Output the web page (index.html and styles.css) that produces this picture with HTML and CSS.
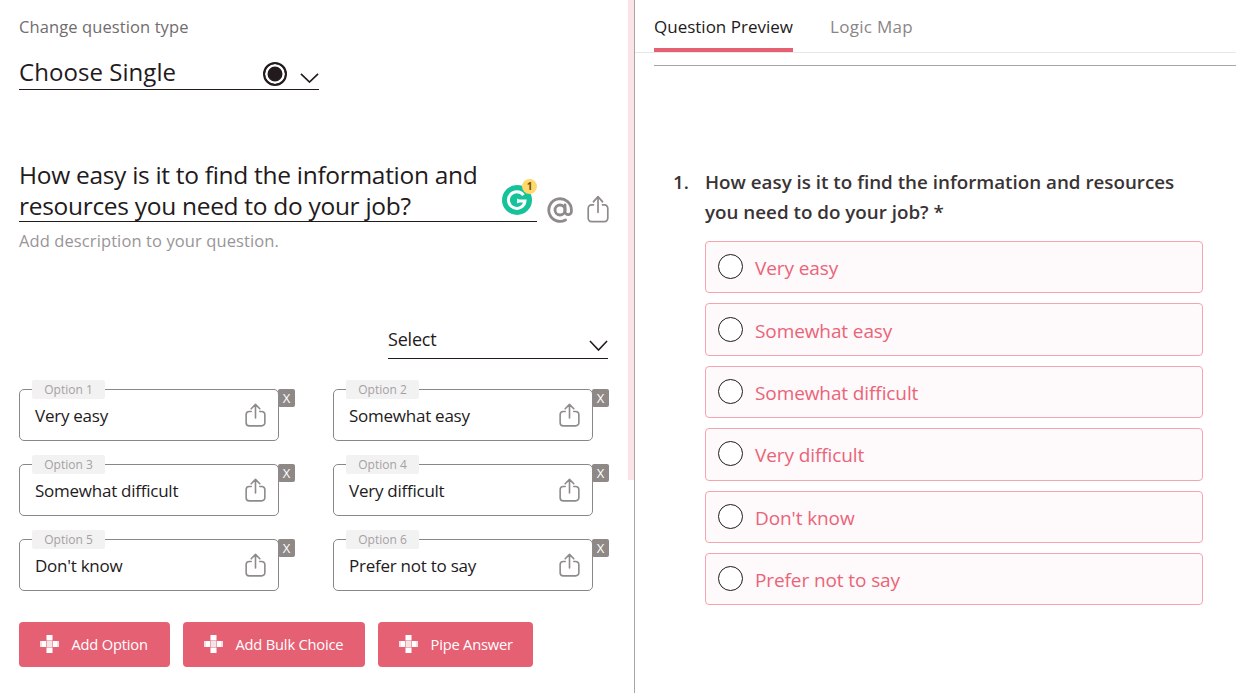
FILE: index.html
```html
<!DOCTYPE html>
<html lang="en">
<head>
<meta charset="utf-8">
<title>Question editor</title>
<link rel="stylesheet" href="styles.css">
</head>
<body>
<svg class="defs" width="0" height="0" aria-hidden="true">
  <symbol id="share" viewBox="0 0 22 25" preserveAspectRatio="none">
    <path d="M6.500 8.800H4.500a3.300 3.300 0 0 0-3.300 3.300v8.400a3.300 3.300 0 0 0 3.300 3.300h13a3.300 3.300 0 0 0 3.300-3.300v-8.400a3.300 3.300 0 0 0-3.300-3.300h-2M11 15.500V1.800M6.500 6 11 1.500 15.500 6" fill="none" stroke="currentColor" stroke-width="1.700" stroke-linecap="round" stroke-linejoin="round"/>
  </symbol>
  <symbol id="chev" viewBox="0 0 20 11" preserveAspectRatio="none">
    <path d="M1 1l9 9 9-9" fill="none" stroke="currentColor" stroke-width="1.700"/>
  </symbol>
  <symbol id="plus" viewBox="0 0 19 18">
    <path d="M6.500 0h6v5.500h-6zM6.500 12.500h6V18h-6zM0 6h6v6H0zM13 6h6v6h-6z" fill="#fff"/>
    <path d="M6.500 6h6v6h-6z" fill="#f3e4e7"/>
    <path d="M0 6h2v6H0zM17 6h2v6h-2z" fill="#f5dde1"/>
  </symbol>
</svg>
<main class="app">
  <section class="editor">
    <div class="thumb"></div>
    <div class="type-label">Change question type</div>
    <div class="type-select">
      <span class="type-name">Choose Single</span>
      <span class="radio-mark"></span>
      <svg class="type-chev"><use href="#chev"/></svg>
    </div>
    <div class="question-row">
      <div class="question-input">
        How easy is it to find the information and resources you need to do your job?
        <span class="grammarly">
          <svg viewBox="0 0 30 30" width="30" height="30"><circle cx="15" cy="15" r="15" fill="#15c39a"/><path d="M21.500 10.200A8.300 8.300 0 1 0 23 16h-7.500" fill="none" stroke="#fff" stroke-width="3"/><path d="M15 13.500l4.500 2.500-4.500 2.500z" fill="#fff"/></svg>
          <span class="g-badge">1</span>
        </span>
      </div>
      <svg class="at-icon" viewBox="0 0 26 26"><circle cx="13" cy="13" r="5" fill="none" stroke="currentColor" stroke-width="2.800"/><path d="M18 8v6.500a3.200 3.200 0 0 0 6.400 0V13A11.300 11.300 0 1 0 18.500 23" fill="none" stroke="currentColor" stroke-width="2.800" stroke-linecap="round"/></svg>
      <svg class="share-lg"><use href="#share"/></svg>
    </div>
    <div class="description">Add description to your question.</div>
    <div class="select-row">
      <div class="small-select">
        <span>Select</span>
        <svg class="small-chev"><use href="#chev"/></svg>
      </div>
    </div>
    <div class="options">
      <div class="option"><span class="option-tag">Option 1</span><span class="option-text">Very easy</span><svg class="share-md"><use href="#share"/></svg><button class="remove">X</button></div>
      <div class="option"><span class="option-tag">Option 2</span><span class="option-text">Somewhat easy</span><svg class="share-md"><use href="#share"/></svg><button class="remove">X</button></div>
      <div class="option"><span class="option-tag">Option 3</span><span class="option-text">Somewhat difficult</span><svg class="share-md"><use href="#share"/></svg><button class="remove">X</button></div>
      <div class="option"><span class="option-tag">Option 4</span><span class="option-text">Very difficult</span><svg class="share-md"><use href="#share"/></svg><button class="remove">X</button></div>
      <div class="option"><span class="option-tag">Option 5</span><span class="option-text">Don't know</span><svg class="share-md"><use href="#share"/></svg><button class="remove">X</button></div>
      <div class="option"><span class="option-tag">Option 6</span><span class="option-text">Prefer not to say</span><svg class="share-md"><use href="#share"/></svg><button class="remove">X</button></div>
    </div>
    <div class="actions">
      <button class="action"><svg class="plus"><use href="#plus"/></svg>Add Option</button>
      <button class="action"><svg class="plus"><use href="#plus"/></svg>Add Bulk Choice</button>
      <button class="action"><svg class="plus"><use href="#plus"/></svg>Pipe Answer</button>
    </div>
  </section>
  <section class="preview">
    <nav class="tabs">
      <span class="tab active">Question Preview</span>
      <span class="tab logic">Logic Map</span>
    </nav>
    <div class="rule"></div>
    <div class="q-block">
      <div class="q-title"><span class="q-num">1.</span><span class="q-text">How easy is it to find the information and resources you need to do your job? *</span></div>
      <div class="choices">
        <div class="choice"><span class="circle"></span>Very easy</div>
        <div class="choice"><span class="circle"></span>Somewhat easy</div>
        <div class="choice"><span class="circle"></span>Somewhat difficult</div>
        <div class="choice"><span class="circle"></span>Very difficult</div>
        <div class="choice"><span class="circle"></span>Don't know</div>
        <div class="choice"><span class="circle"></span>Prefer not to say</div>
      </div>
    </div>
  </section>
</main>
</body>
</html>
```

FILE: styles.css
```css
* { box-sizing: border-box; }
html, body { margin: 0; height: 100%; overflow: hidden; background: #fff; }
body { font-family: "Open Sans", "Noto Sans", sans-serif; color: #231a1c; }
.defs { position: absolute; }
.app { display: flex; width: 1236px; height: 693px; }

.editor { position: relative; width: 635px; height: 693px; padding: 16px 0 0 19px; border-right: 1px solid #a9a5a6; flex: none; }
.thumb { position: absolute; right: 0; top: 0; width: 6px; height: 480px; background: #fae4e7; }
.type-label { font-size: 16.500px; line-height: 22px; color: #716c6e; letter-spacing: .1px; }
.type-select { display: flex; align-items: flex-end; width: 300px; height: 38px; margin-top: 14px; border-bottom: 1px solid #231a1c; padding-bottom: 3px; }
.type-name { font-size: 24px; line-height: 30px; flex: 1; letter-spacing: .05px; margin-bottom: -1px; }
.radio-mark { width: 24px; height: 24px; border: 2px solid #231a1c; border-radius: 50%; background: #231a1c; box-shadow: inset 0 0 0 2.500px #fff; margin-right: 13px; }
.type-chev { width: 19px; height: 10px; color: #231a1c; margin-bottom: 3px; }

.question-row { display: flex; align-items: flex-end; width: 592px; margin-top: 69px; }
.question-input { position: relative; width: 518px; font-size: 24.500px; line-height: 31px; letter-spacing: -.3px; border-bottom: 1px solid #231a1c; height: 63px; padding-right: 40px; }
.grammarly { position: absolute; left: 483px; top: 26px; width: 30px; height: 30px; }
.g-badge { position: absolute; left: 20px; top: -6px; width: 15px; height: 15px; border-radius: 50%; background: #ffd96b; color: #6e5010; font-size: 10px; font-weight: 700; line-height: 15px; text-align: center; letter-spacing: 0; }
.at-icon { width: 26px; height: 26px; color: #8f8b8c; margin: 0 0 -1px 10px; }
.share-lg { width: 22px; height: 28px; color: #8f8b8c; margin: 0 0 -1px 14px; }
.description { font-size: 16.500px; line-height: 22px; color: #999597; margin-top: 8px; letter-spacing: .1px; }

.select-row { display: flex; justify-content: flex-end; width: 589px; margin-top: 75px; }
.small-select { display: flex; align-items: center; justify-content: space-between; width: 220px; height: 32px; border-bottom: 1px solid #231a1c; font-size: 18px; letter-spacing: -.2px; }
.small-select span { margin-top: -8px; }
.small-chev { width: 19px; height: 11px; color: #231a1c; margin-top: 5px; }

.options { display: grid; grid-template-columns: 260px 260px; column-gap: 54px; row-gap: 23px; margin-top: 30px; }
.option { position: relative; display: flex; align-items: center; justify-content: space-between; height: 52px; border: 1px solid #8b8788; border-radius: 5px; padding: 0 12px 0 15px; }
.option-text { font-size: 17px; letter-spacing: -.25px; color: #231a1c; }
.option-tag { position: absolute; left: 12px; top: -10px; width: 73px; height: 19px; background: #f3f2f2; border-radius: 2px; text-align: center; font-size: 12px; line-height: 19px; color: #a5a1a2; }
.remove { position: absolute; left: 258px; top: -1px; width: 17px; height: 18px; padding: 0; border: 0; border-radius: 2px; background: #8e8886; color: #fff; font: 13px/18px "Open Sans", sans-serif; }
.share-md { width: 21px; height: 24px; color: #8f8b8c; }

.actions { display: grid; grid-template-columns: 151px 182px 155px; column-gap: 13px; margin-top: 31px; }
.action { display: flex; align-items: center; height: 45px; border: 0; border-radius: 4px; background: #e66074; color: #fff; font: 14.700px "Open Sans", sans-serif; letter-spacing: -.2px; padding: 0 0 2px 21px; white-space: nowrap; }
.plus { width: 19px; height: 18px; margin-right: 12.500px; }

.preview { flex: 1; min-width: 0; }
.tabs { display: flex; gap: 37px; height: 53px; padding-left: 19px; border-bottom: 1px solid #e9e7e8; }
.tab { height: 52px; padding-top: 15px; font-size: 17px; line-height: 24px; color: #8a8688; }
.tab.logic { letter-spacing: .3px; }
.tab.active { color: #231a1c; border-bottom: 4px solid #e66074; }
.rule { height: 1px; margin: 12px 0 0 19px; background: #a9a5a6; }
.q-block { padding: 101px 33px 0 38px; }
.q-title { display: flex; font-size: 18.800px; line-height: 30px; font-weight: 600; color: #3a3335; }
.q-num { width: 32px; flex: none; }
.choices { display: flex; flex-direction: column; gap: 10px; margin: 14px 0 0 32px; }
.choice { display: flex; align-items: center; height: 52.400px; border: 1px solid #f6a5b0; border-radius: 4px; background: #fef9fa; color: #ea6479; font-size: 19px; letter-spacing: -.1px; padding: 2px 0 0 12px; }
.circle { width: 25px; height: 25px; border: 1.500px solid #231a1c; border-radius: 50%; margin: -3px 12px 0 0; background: #fff; }
```
